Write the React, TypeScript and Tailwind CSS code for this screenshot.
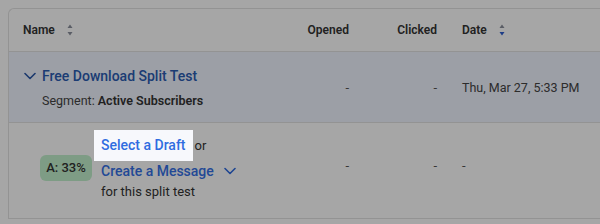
import React from 'react';

function SortIcon({ active }: { active?: 'up' | 'down' }) {
  return (
    <svg width="6" height="14" viewBox="0 0 6 14" className="ml-[12px]">
      <path d="M0.5 5 L3 1.5 L5.5 5 Z" fill={active === 'up' ? '#2f5fd0' : '#8a8f9c'} />
      <path d="M0.5 9 L3 12.5 L5.5 9 Z" fill={active === 'down' ? '#2f5fd0' : '#8a8f9c'} />
    </svg>
  );
}

function Chevron({ className }: { className?: string }) {
  return (
    <svg width="12" height="8" viewBox="0 0 12 8" fill="none" className={className}>
      <path d="M1 1.5 L6 6.5 L11 1.5" stroke="currentColor" strokeWidth="1.6" strokeLinecap="round" strokeLinejoin="round" />
    </svg>
  );
}

const cols = 'grid grid-cols-[282px_60px_88px_1fr]';

export default function App() {
  return (
    <div className="relative w-[600px] h-[224px] overflow-hidden bg-white pt-2 pl-2 font-['Roboto',sans-serif] text-[#333]">
      <div className="w-[640px] rounded-tl-md border-l border-t border-[#e2e2e2]">
        {/* header */}
        <div className={`${cols} h-[43px] items-center border-b border-[#e2e2e2] text-[12px] font-semibold`}>
          <div className="flex items-center pl-[14px]">
            <span>Name</span>
            <SortIcon />
          </div>
          <div className="text-right pr-[2px]">Opened</div>
          <div className="text-right pr-[2px]">Clicked</div>
          <div className="flex items-center pl-[23px]">
            <span>Date</span>
            <SortIcon active="down" />
          </div>
        </div>

        {/* split test row */}
        <div className={`${cols} items-center bg-[#f0f4ff] border-b border-[#e2e2e2] pt-[14px] pb-[12px]`}>
          <div className="pl-[15px]">
            <div className="flex items-center h-5">
              <Chevron className="text-[#2a58a8]" />
              <span className="ml-[6px] text-[14px] font-medium text-[#2b5cb2]">Free Download Split Test</span>
            </div>
            <div className="mt-[6px] pl-[18px] text-[12.5px] leading-[18px] text-[#444]">
              Segment: <span className="font-semibold text-[#333]">Active Subscribers</span>
            </div>
          </div>
          <div className="text-right pr-[2px] text-[13px] text-[#555]">-</div>
          <div className="text-right pr-[2px] text-[13px] text-[#555]">-</div>
          <div className="pl-[23px] text-[12.5px] text-[#444]">Thu, Mar 27, 5:33 PM</div>
        </div>

        {/* variant A row */}
        <div className={`${cols} items-center border-b border-[#e2e2e2] pt-[7px] pb-[17px]`}>
          <div className="flex items-start pl-[31px]">
            <div className="mt-[25px] flex h-[26px] w-[52px] items-center justify-center rounded-md bg-[#c2f0cc] text-[13px] font-medium text-[#333]">
              A: 33%
            </div>
            <div className="ml-[2px] flex flex-col">
              <div className="flex items-center">
                <span className="relative z-20 flex h-[31px] items-center bg-[#f7f8fc] px-[7px] text-[14px] font-medium text-[#2f6ce0]">
                  Select a Draft
                </span>
                <span className="ml-[2px] text-[13px]">or</span>
              </div>
              <div className="flex items-center pl-[7px] h-[18px] mt-[1px]">
                <span className="text-[14px] font-medium text-[#3571e6]">Create a Message</span>
                <Chevron className="ml-[10px] text-[#2f6ce0]" />
              </div>
              <div className="pl-[7px] mt-[3px] text-[13px] leading-[18px]">for this split test</div>
            </div>
          </div>
          <div className="text-right pr-[2px] text-[13px] text-[#555]">-</div>
          <div className="text-right pr-[2px] text-[13px] text-[#555]">-</div>
          <div className="pl-[23px] text-[13px] text-[#555]">-</div>
        </div>
      </div>

      {/* tour overlay */}
      <div className="absolute inset-0 z-10 bg-black/35" />
    </div>
  );
}
